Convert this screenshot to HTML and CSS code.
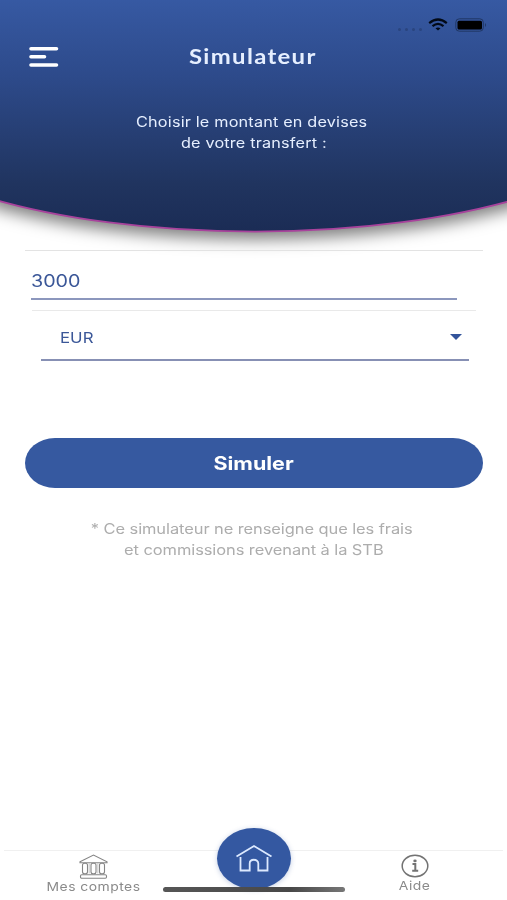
FILE: index.html
```html
<!DOCTYPE html>
<html lang="fr">

<head>
    <meta charset="UTF-8">
    <meta name="viewport" content="width=device-width, initial-scale=1.0">
    <title>Simulateur</title>
    <link rel="stylesheet" href="styles.css">
</head>

<body>
    <header class="header">
        <svg class="header-bg" width="507" height="270" viewBox="0 0 507 270">
            <defs>
                <linearGradient id="blue" x1="0" y1="0" x2="0" y2="1">
                    <stop offset="0" stop-color="#375aa4" />
                    <stop offset="0.35" stop-color="#2d4a8a" />
                    <stop offset="0.8" stop-color="#20345f" />
                    <stop offset="1" stop-color="#1b2c55" />
                </linearGradient>
            </defs>
            <path class="header-shape" d="M-10 -5H521V197.800A400 133 0 0 1 -10 198.300Z" fill="url(#blue)" />
        </svg>
        <div class="status">
            <span class="signal"><i></i><i></i><i></i><i></i></span>
            <svg class="wifi" width="20" height="14" viewBox="0 0 20 14" fill="none" stroke="#020916" stroke-width="2.200">
                <path d="M1.200 5.200Q10 -2.200 18.800 5.200" />
                <path d="M4.500 8.200Q10 3.700 15.500 8.200" />
                <path d="M7.500 10.300Q10 8.500 12.500 10.300L10 12.600Z" fill="#020916" stroke="none" />
            </svg>
            <svg class="battery" width="33" height="14" viewBox="0 0 33 14">
                <rect x="0.800" y="0.800" width="27.500" height="12.400" rx="3.500" fill="none" stroke="#203765" />
                <rect x="2.500" y="2.700" width="24.500" height="8.800" rx="1.500" fill="#000" />
                <path d="M30 5Q32 7 30 9Z" fill="#203765" />
            </svg>
        </div>
        <div class="title-bar">
            <svg class="menu" width="30" height="22" viewBox="0 0 30 22" stroke="#fff" stroke-width="3.600" stroke-linecap="round">
                <path d="M2 2.700H27.500M2 10.800H15.500M2 19H27.500" />
            </svg>
            <h1 class="title">Simulateur</h1>
        </div>
        <p class="intro"><span class="wide">Choisir le montant en devises</span><br><span class="wide line2">de votre transfert :</span></p>
    </header>

    <main class="form">
        <div class="amount"><span class="wide">3000</span></div>
        <div class="currency">
            <div class="select">
                <span class="wide">EUR</span>
                <svg width="12" height="6" viewBox="0 0 12 6"><path d="M0 0H12L6 6Z" fill="#33549b" /></svg>
            </div>
        </div>
        <button class="submit"><span class="wide">Simuler</span></button>
        <p class="note"><span class="wide">* Ce simulateur ne renseigne que les frais</span><br><span class="wide line2">et commissions revenant à la STB</span></p>
    </main>

    <nav class="tabs">
        <a class="tab accounts">
            <svg width="29" height="25" viewBox="0 0 29 25" fill="none" stroke="#858585" stroke-width="1.100">
                <path d="M1 7.800L14.500 1L28 7.800V8.800H1Z" />
                <rect x="3.500" y="9.300" width="5" height="10.500" rx="2" />
                <rect x="12" y="9.300" width="5" height="10.500" rx="2" />
                <rect x="20.500" y="9.300" width="5" height="10.500" rx="2" />
                <path d="M10.200 9.500V19.500M18.800 9.500V19.500" opacity="0.400" />
                <rect x="1.500" y="20.700" width="26" height="3.500" rx="1.200" />
            </svg>
            <span class="wide">Mes comptes</span>
        </a>
        <a class="home">
            <svg width="38" height="28" viewBox="0 0 38 28" fill="none" stroke="#dce9ff" stroke-width="1.800">
                <path d="M1.500 12.500L19 2L36.500 12.500" />
                <path d="M5.500 13V26.500H14.700V19.500C14.700 14.500 23.300 14.500 23.300 19.500V26.500H32.500V13" />
            </svg>
        </a>
        <a class="tab help">
            <svg width="28" height="24" viewBox="0 0 28 24" fill="none" stroke="#737373">
                <ellipse cx="14" cy="12" rx="12.800" ry="10.700" stroke-width="1.500" />
                <path d="M11.500 10H14.300V16.500M11.200 16.700H17.200" stroke-width="2" />
                <ellipse cx="14" cy="6.900" rx="1.700" ry="1.400" fill="#737373" stroke="none" />
            </svg>
            <span class="wide">Aide</span>
        </a>
        <div class="home-indicator"></div>
    </nav>
</body>

</html>
```
FILE: styles.css
```css
* {
    box-sizing: border-box;
}

body {
    margin: 0;
    width: 507px;
    height: 900px;
    display: flex;
    flex-direction: column;
    font-family: Inter, "Liberation Sans", sans-serif;
    background: #fff;
    color: #3b5798;
    overflow: hidden;
}

/* wide letterforms */
.wide {
    display: inline-block;
    white-space: nowrap;
    transform: scaleX(1.16);
}

.line2 {
    margin-left: 4px;
}

/* header */
.header {
    position: relative;
    height: 250px;
    color: #e6efff;
}

.header-bg {
    position: absolute;
    top: 0;
    left: 0;
    z-index: -1;
}

.header-shape {
    stroke: #a8439c;
    stroke-width: 1.8;
    filter: drop-shadow(0 7px 8px rgba(0, 0, 0, 0.5));
}

.status {
    display: flex;
    height: 36px;
    padding: 18px 19px 0 0;
    justify-content: flex-end;
}

.signal {
    display: flex;
    gap: 4px;
    padding: 10px 6px 0 0;
}

.signal i {
    width: 3px;
    height: 3px;
    border-radius: 50%;
    background: #2a457f;
}

.battery {
    margin-left: 7px;
}

.title-bar {
    display: flex;
    height: 42px;
    padding: 10px 0 0 29px;
}

.title {
    margin: -4px 0 0 129.5px;
    font: 700 21.5px/28px Lato, sans-serif;
    letter-spacing: 1.2px;
    transform: scaleX(1.11);
    transform-origin: left;
}

.intro {
    margin: 33px 4px 0 0;
    text-align: center;
    font-size: 14px;
    line-height: 21px;
    letter-spacing: 0.15px;
}

/* form */
.form {
    display: flex;
    flex: 1;
    flex-direction: column;
    margin: 0 24px 0 25px;
    border-top: 1px solid #e3e3e3;
}

.amount {
    height: 49px;
    margin: 0 26px 0 6px;
    padding-top: 18px;
    border-bottom: 2px solid #8c97bd;
    font-size: 17px;
    line-height: 24px;
}

.amount .wide,
.select .wide {
    transform-origin: left;
}

.currency {
    margin: 10px 7px 0 7px;
    border-top: 1px solid #e9e9e9;
}

.select {
    display: flex;
    align-items: center;
    justify-content: space-between;
    height: 50px;
    margin: 0 7px 0 9px;
    padding: 4px 7px 0 19px;
    border-bottom: 2px solid #8790b4;
    font-size: 14.5px;
}

.submit {
    height: 50px;
    margin-top: 77px;
    border: 0;
    border-radius: 30px / 25px;
    background: #3659a0;
    color: #fff;
    font: 700 18.5px Inter, sans-serif;
}

.note {
    margin: 30px 5px 0 0;
    color: #adadad;
    text-align: center;
    font-size: 14.2px;
    line-height: 21px;
    letter-spacing: -0.07px;
}

/* bottom navigation */
.tabs {
    position: relative;
    display: flex;
    height: 50px;
    margin: 0 4px;
    border-top: 1px solid #f0f0f0;
    color: #8a8a8a;
    font-size: 12px;
}

.tab {
    display: flex;
    flex-direction: column;
    align-items: center;
    padding-top: 3px;
}

.tab .wide {
    letter-spacing: 0.4px;
}

.accounts {
    width: 178px;
}

.home {
    display: flex;
    align-items: center;
    justify-content: center;
    width: 74px;
    height: 61px;
    margin: -23px 0 0 35px;
    border-radius: 50%;
    background: #3458a1;
    box-shadow: 0 1px 5px rgba(52, 88, 161, 0.3);
}

.home svg {
    margin-top: -2px;
}

.help {
    width: 60px;
    margin-left: 94px;
}

.home-indicator {
    position: absolute;
    left: 159px;
    top: 36px;
    width: 182px;
    height: 5px;
    border-radius: 3px;
    background: linear-gradient(to right, #565656, #484848 70%, #777);
}
```
